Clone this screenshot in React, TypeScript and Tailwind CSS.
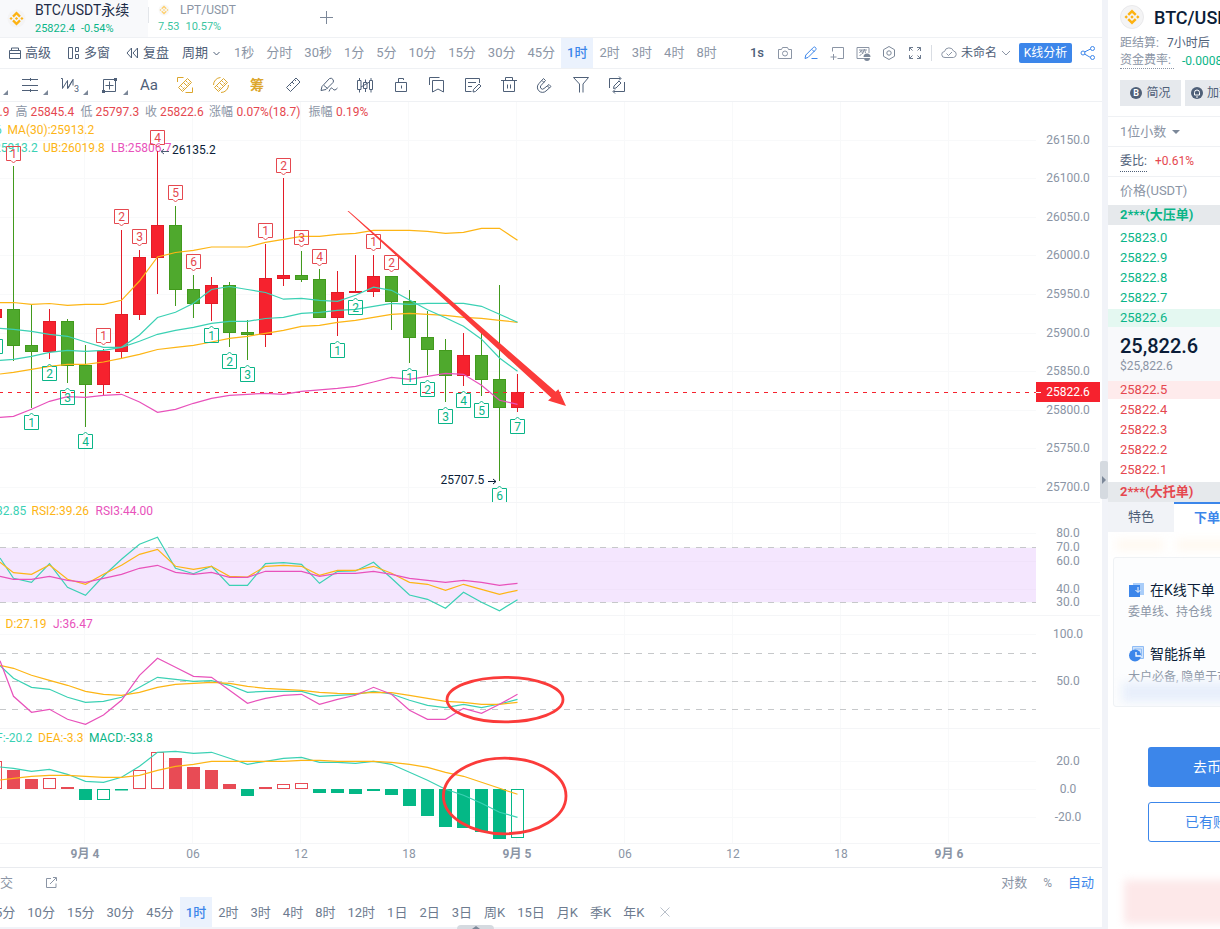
import type { ReactNode } from "react";

const GRAY = "#8b95a5";
const TEAL = "#3bd1b4";
const GOLD = "#fdb515";
const PINK = "#e852bb";

const PERIODS = ["1秒", "分时", "30秒", "1分", "5分", "10分", "15分", "30分", "45分", "1时", "2时", "3时", "4时", "8时"];
const BOTTOM_PERIODS = [
  "5分", "10分", "15分", "30分", "45分", "1时", "2时", "3时", "4时", "8时",
  "12时", "1日", "2日", "3日", "周K", "15日", "月K", "季K", "年K",
];
const ASKS = ["25823.0", "25822.9", "25822.8", "25822.7", "25822.6"];
const BIDS = ["25822.5", "25822.4", "25822.3", "25822.2", "25822.1"];

// [high, body top, body bottom, low, up?] in chart pixels, first one is half off screen
const CANDLES: [number, number, number, number, number][] = [
  [309, 309, 318, 318, 1],
  [166, 309, 346, 361, 0],
  [305, 345, 352, 408, 0],
  [309, 321, 352, 359, 1],
  [319, 321, 366, 383, 0],
  [345, 365, 385, 427, 0],
  [349, 351, 385, 395, 1],
  [230, 314, 352, 358, 1],
  [250, 257, 315, 320, 1],
  [151, 225, 258, 294, 1],
  [206, 225, 290, 306, 0],
  [275, 289, 304, 318, 0],
  [277, 285, 304, 321, 1],
  [282, 285, 333, 347, 0],
  [320, 332, 335, 360, 0],
  [244, 278, 335, 347, 1],
  [178, 275, 279, 286, 1],
  [251, 275, 280, 282, 0],
  [269, 279, 318, 318, 0],
  [271, 292, 318, 336, 1],
  [255, 291, 293, 293, 1],
  [255, 276, 292, 297, 1],
  [276, 276, 302, 330, 0],
  [290, 301, 338, 363, 0],
  [311, 337, 350, 375, 0],
  [339, 350, 376, 402, 0],
  [333, 355, 376, 386, 1],
  [333, 355, 380, 396, 0],
  [285, 379, 408, 481, 0],
  [374, 392, 408, 412, 1],
];

// [candle index, box top, label]
const SELL_MARKS: [number, number, string][] = [
  [0, 146, "1"], [5, 328, "1"], [6, 209, "2"], [7, 229, "3"], [8, 130, "4"], [9, 185, "5"], [10, 254, "6"],
  [14, 223, "1"], [15, 158, "2"], [16, 230, "3"], [17, 249, "4"], [20, 234, "1"], [21, 255, "2"],
];
const BUY_MARKS: [number, number, string][] = [
  [-1, 339, ""], [1, 415, "1"], [2, 366, "2"], [3, 390, "3"], [4, 434, "4"], [11, 328, "1"], [12, 354, "2"],
  [13, 367, "3"], [18, 343, "1"], [19, 300, "2"], [22, 370, "1"], [23, 382, "2"], [24, 409, "3"],
  [25, 393, "4"], [26, 403, "5"], [27, 488, "6"], [28, 419, "7"],
];

const UB = [302.7, 302.5, 304.3, 303.5, 305.3, 304.3, 304.3, 300.3, 281, 257, 252.5, 250.3, 247, 247, 247, 242.3, 239.3, 236.3, 236.3, 234.3, 233.3, 230.3, 230.3, 230.3, 231.3, 233.3, 232.3, 228.3, 228.3, 240.3];
const FAST = [328.3, 329.3, 331.3, 334.3, 336.3, 342, 347.3, 347.3, 335, 317.5, 312.3, 303.3, 289.5, 286.5, 289.5, 292.5, 299.2, 298.3, 300.3, 301.3, 295.3, 287.2, 290.3, 300, 309.7, 317.7, 326.3, 339.2, 358, 371.3];
const MID = [360.3, 359.3, 356.3, 352.3, 350.3, 351.3, 350.3, 347.3, 341.3, 334.3, 330.3, 327.3, 323.3, 321.3, 321.3, 318.5, 317.3, 313.3, 312.3, 310.3, 309.3, 306.3, 303.3, 304.3, 303.3, 303.3, 303.3, 306.3, 314.3, 322.3];
const SLOW = [374, 372.3, 369.3, 366.3, 364.3, 364.3, 362, 358.3, 354.3, 349.5, 347.3, 345.3, 342, 338.3, 336.3, 333.3, 330.3, 326.3, 325.3, 322.3, 320.3, 317.3, 314.3, 313.3, 314.3, 315.3, 317.3, 318.3, 320.3, 322.3];
const LB = [417.3, 416.3, 409.3, 401.3, 396.7, 397.3, 395.3, 394.3, 402, 412.3, 409.3, 403.3, 398.3, 395.3, 394.3, 393.3, 394.3, 391.3, 389.8, 388.3, 386.3, 382, 377.3, 379.3, 376.3, 373.3, 374.3, 385.3, 400.3, 404.3];

const RSI1 = [558, 578.3, 582.3, 563.7, 587.3, 595.3, 576, 559.3, 544.3, 537.3, 568.3, 573.7, 566.3, 585.3, 585.3, 563.7, 562.7, 564.3, 583.3, 571.3, 571, 562.3, 578.3, 595, 599.3, 608.3, 592.3, 602.3, 610.7, 599.7];
const RSI2 = [562.3, 572.7, 574.3, 565, 579.3, 584.3, 574.3, 565.3, 554.3, 549.3, 566.3, 569.3, 566.3, 576.3, 577, 566.3, 565.3, 566.3, 575.3, 570.3, 570.3, 566.3, 573.3, 582.3, 584.3, 590.3, 584.3, 589.3, 594.3, 590.3];
const RSI3 = [576.3, 579.3, 579.3, 576.3, 580.3, 582.3, 578.3, 574.3, 568.3, 565.3, 572.3, 574.3, 572.3, 577.3, 577.3, 571.3, 571.3, 571.3, 576.3, 573.3, 573.3, 571.3, 574.3, 578.3, 580.3, 582.3, 580.3, 582.3, 585.3, 583.3];

const K = [665.7, 678.3, 687.3, 689.3, 697.3, 702.3, 701.3, 697.3, 687.3, 677.3, 679.3, 681.3, 680.7, 685.3, 692.3, 691.3, 691.3, 691.3, 696.3, 695.3, 694.3, 691.3, 694, 700.3, 705.3, 707.7, 704.3, 707.7, 704, 699.3];
const D = [665.3, 668.3, 675.3, 680.3, 685.3, 691.3, 694.3, 695.3, 692.3, 687.3, 684.3, 683.3, 682.3, 683.3, 686.3, 688.3, 689.3, 690.3, 692.3, 693.3, 693.7, 692.3, 692.7, 695.3, 698.3, 701.3, 702.3, 704.3, 704.3, 702.3];
const J = [660.7, 696.3, 712.3, 709.3, 719.3, 724.3, 715, 700.3, 675.3, 658.3, 667.3, 676.3, 677.3, 690.3, 703.3, 698.3, 695.3, 694.3, 704.3, 699.3, 695.3, 687.3, 694.3, 710.3, 719.3, 719.3, 708.3, 713.3, 704.3, 694.3];

const DIF = [767, 768.3, 771.3, 769.3, 774.3, 781.3, 782.3, 777.3, 766.3, 752.3, 751.3, 753.3, 752.3, 758.3, 764.3, 761.3, 758.3, 757.3, 762.3, 762.3, 763.3, 761.3, 764.3, 772.3, 780.3, 789.3, 795.3, 803.3, 812.3, 817.3];
const DEA = [780, 778.3, 776.3, 775.3, 775.3, 776.3, 777.3, 777.3, 775.3, 770.3, 766.3, 764.3, 761.3, 761.3, 761.3, 761.3, 761.3, 760.3, 760.3, 761.3, 761.3, 761.3, 762.3, 764.3, 767.3, 772.3, 776.3, 782.3, 788.3, 794.3];

// [bar end, hollow?], zero line is at 789
const BARS: [number, number][] = [
  [761, 1], [770, 0], [779, 0], [778, 1], [787, 0], [800, 0], [800, 1], [790.5, 0], [770, 1], [752, 1],
  [758, 0], [767, 0], [770, 0], [784, 0], [796, 0], [787, 0], [784, 1], [783, 1], [793, 0], [793, 0],
  [794, 0], [791, 0], [795, 0], [806, 0], [816, 0], [827, 0], [828, 0], [832, 0], [839, 0], [838, 1],
];

const PRICE_AXIS: [number, string][] = [
  [140, "26150.0"], [178, "26100.0"], [217, "26050.0"], [255, "26000.0"], [294, "25950.0"],
  [333, "25900.0"], [371, "25850.0"], [410, "25800.0"], [448, "25750.0"], [487, "25700.0"],
];
const SUB_AXIS: [number, string][] = [
  [533, "80.0"], [547, "70.0"], [561, "60.0"], [589, "40.0"], [602, "30.0"],
  [634, "100.0"], [681, "50.0"], [761, "20.0"], [789, "0.0"], [817, "-20.0"],
];
const TIMES: [number, string][] = [
  [84, "9月 4"], [192, "06"], [300, "12"], [408, "18"], [516, "9月 5"], [624, "06"], [732, "12"], [840, "18"], [948, "9月 6"],
];

function Curve({ ys, color }: { ys: number[]; color: string }) {
  const points = ys.map((y, i) => `${i === 0 ? 0 : 13.5 + (i - 1) * 18},${y}`).join(" ");
  return <polyline points={points} fill="none" stroke={color} strokeWidth="1.2" />;
}

function Label({ x, y, color, children }: { x: number; y: number; color: string; children: ReactNode }) {
  return (
    <text x={x} y={y + 4} fill={color}>
      {children}
    </text>
  );
}

function Chart() {
  return (
    <svg width="1102" height="765" viewBox="0 102 1102 765" className="block text-[12px]">
      {/* Grid */}
      <g stroke="#f8f9fa">
        {TIMES.map(([x]) => (
          <line key={x} x1={x + 0.5} x2={x + 0.5} y1="102" y2="843" />
        ))}
        {[...PRICE_AXIS, ...SUB_AXIS].map(([y, label]) => (
          <line key={label + y} x1="0" x2="1036" y1={y + 0.5} y2={y + 0.5} />
        ))}
      </g>
      <g stroke="#f4f5f7">
        {[502, 615, 728, 843].map((y) => (
          <line key={y} x1="0" x2="1100" y1={y + 0.5} y2={y + 0.5} />
        ))}
      </g>
      <rect x="0" y="548" width="1036" height="54" fill="#f4e6fe" />
      <g stroke="#f0e2fa">
        <line x1="0" x2="1036" y1="561.5" y2="561.5" />
        <line x1="0" x2="1036" y1="589.5" y2="589.5" />
      </g>
      <g stroke="#c6c8ca" strokeDasharray="6 6">
        {[547, 602, 653, 681, 709].map((y) => (
          <line key={y} x1="0" x2="1036" y1={y + 0.5} y2={y + 0.5} />
        ))}
      </g>

      {/* Legends */}
      <Label x={-0.5} y={112} color="#e5484f">.9</Label>
      <Label x={15.5} y={112} color={GRAY}>高</Label>
      <Label x={30.5} y={112} color="#e5484f">25845.4</Label>
      <Label x={80.5} y={112} color={GRAY}>低</Label>
      <Label x={95.5} y={112} color="#e5484f">25797.3</Label>
      <Label x={145} y={112} color={GRAY}>收</Label>
      <Label x={160} y={112} color="#e5484f">25822.6</Label>
      <Label x={209} y={112} color={GRAY}>涨幅</Label>
      <Label x={236.5} y={112} color="#e5484f">0.07%(18.7)</Label>
      <Label x={308.5} y={112} color={GRAY}>振幅</Label>
      <Label x={336} y={112} color="#e5484f">0.19%</Label>
      <Label x={-5} y={130} color={TEAL}>6</Label>
      <Label x={7.5} y={130} color={GOLD}>MA(30):25913.2</Label>
      <Label x={-6} y={148} color={TEAL}>25913.2</Label>
      <Label x={43} y={148} color={GOLD}>UB:26019.8</Label>
      <Label x={111} y={148} color={PINK}>LB:25806.7</Label>

      {/* Candles */}
      {CANDLES.map(([high, top, bottom, low, up], i) => {
        const x = 7 + (i - 1) * 18;
        const fill = up ? "#f6222e" : "#4fa92d";
        const edge = up ? "#e31c28" : "#429a1d";
        return (
          <g key={i}>
            <rect x={x + 6} y={high} width="1" height={low - high} fill={edge} />
            <rect x={x + 0.5} y={top + 0.5} width="12" height={bottom - top - 1} fill={fill} stroke={edge} />
          </g>
        );
      })}
      <line x1="0" x2="1036" y1="392.5" y2="392.5" stroke="#f6222e" strokeDasharray="4 5" strokeDashoffset="1" />

      <Curve ys={UB} color={GOLD} />
      <Curve ys={SLOW} color={GOLD} />
      <Curve ys={FAST} color={TEAL} />
      <Curve ys={MID} color={TEAL} />
      <Curve ys={LB} color={PINK} />

      {/* Numbered marks */}
      {SELL_MARKS.map(([i, y, n]) => {
        const x = 6.5 + i * 18;
        return (
          <g key={i} stroke="#e5484f" fill="none">
            <path d={`M${x} ${y + 0.5}h14v14h-4.5l-2.5 2.5l-2.5-2.5h-4.5z`} />
            <text x={x + 7} y={y + 12} fill="#e5484f" stroke="none" textAnchor="middle">{n}</text>
          </g>
        );
      })}
      <clipPath id="main-pane">
        <rect x="0" y="102" width="1102" height="400" />
      </clipPath>
      <g clipPath="url(#main-pane)">
        {BUY_MARKS.map(([i, y, n]) => {
          const x = 6.5 + i * 18;
          return (
            <g key={i} stroke="#0ab588" fill="none">
              <path d={`M${x} ${y + 0.5}h4.5l2.5 -2.5l2.5 2.5h4.5v14h-14z`} />
              <text x={x + 7} y={y + 12} fill="#0ab588" stroke="none" textAnchor="middle">{n}</text>
            </g>
          );
        })}
      </g>

      {/* High / low callouts */}
      <Label x={172} y={150} color="#0b1d38">26135.2</Label>
      <path d="M169 151.5h-8m3-2.5l-3 2.5l3 2.5" fill="none" stroke="#4b5b74" />
      <Label x={440.5} y={480} color="#0b1d38">25707.5</Label>
      <path d="M488 481.5h8m-3-2.5l3 2.5l-3 2.5" fill="none" stroke="#0b1d38" />

      {/* RSI */}
      <Label x={-4} y={511} color={TEAL}>32.85</Label>
      <Label x={31.5} y={511} color={GOLD}>RSI2:39.26</Label>
      <Label x={95.5} y={511} color={PINK}>RSI3:44.00</Label>
      <Curve ys={RSI1} color={TEAL} />
      <Curve ys={RSI2} color={GOLD} />
      <Curve ys={RSI3} color={PINK} />

      {/* KDJ */}
      <Label x={5.5} y={624} color={GOLD}>D:27.19</Label>
      <Label x={53} y={624} color={PINK}>J:36.47</Label>
      <Curve ys={K} color={TEAL} />
      <Curve ys={D} color={GOLD} />
      <Curve ys={J} color={PINK} />

      {/* MACD */}
      <Label x={-4} y={738} color={TEAL}>F:-20.2</Label>
      <Label x={38} y={738} color={GOLD}>DEA:-3.3</Label>
      <Label x={89} y={738} color="#0ab588">MACD:-33.8</Label>
      {BARS.map(([end, hollow], i) => {
        const x = 7 + (i - 1) * 18;
        const up = end < 789;
        const color = up ? "#e84b55" : "#04b886";
        const y = up ? end : 789;
        const h = Math.abs(end - 789);
        return hollow ? (
          <rect key={i} x={x + 0.5} y={y + 0.5} width="12" height={h - 1} fill="#fff" stroke={color} />
        ) : (
          <rect key={i} x={x} y={y} width="13" height={h} fill={color} />
        );
      })}
      <Curve ys={DIF} color={TEAL} />
      <Curve ys={DEA} color={GOLD} />

      {/* Axes */}
      <g fill={GRAY} textAnchor="middle">
        {[...PRICE_AXIS, ...SUB_AXIS].map(([y, label]) => (
          <text key={label + y} x="1068" y={y + 4}>{label}</text>
        ))}
        {TIMES.map(([x, label]) => (
          <text key={x} x={x + 1} y="858" fontWeight={label.includes("月") ? 700 : 400}>{label}</text>
        ))}
      </g>
      <rect x="1036" y="382" width="64" height="20" fill="#f6222e" />
      <line x1="1036" x2="1041" y1="392.5" y2="392.5" stroke="#fff" />
      <text x="1068" y="396" fill="#fff" textAnchor="middle">25822.6</text>

      {/* Hand drawn annotations */}
      <path d="M347.5 211L348.7 211L555.7 391.8L558.3 389.3L566 406L548 400.4L551.3 397.8Z" fill="#fb3b3a" />
      <g fill="none" stroke="#fb3b3a" strokeWidth="2.8">
        <ellipse cx="505" cy="699.6" rx="58" ry="22.3" />
        <ellipse cx="504.7" cy="796" rx="61.3" ry="37.8" />
      </g>
    </svg>
  );
}

type BinanceProps = { size: number; glyph: number; ring?: string; faded?: boolean };

function Binance({ size, glyph, ring = "none", faded = false }: BinanceProps) {
  const pad = (size - glyph) / 2;
  return (
    <svg width={size} height={size} viewBox={`0 0 ${size} ${size}`} className={faded ? "shrink-0 opacity-60" : "shrink-0"}>
      <circle cx={size / 2} cy={size / 2} r={size / 2 - 0.5} fill="#f4f4f5" stroke={ring} />
      <g transform={`translate(${pad} ${pad}) scale(${glyph / 126.6})`} fill="#fdb211">
        <path d="M38.73 53.2l24.59-24.58 24.6 24.6 14.3-14.31L63.32 0 24.43 38.9z M0 63.31l14.3-14.31 14.31 14.31-14.31 14.3z M38.73 73.41l24.59 24.59 24.6-24.6 14.31 14.29-38.9 38.91-38.91-38.88z M98 63.31l14.3-14.31 14.31 14.3-14.31 14.32z M77.83 63.3L63.32 48.78 48.81 63.28l14.51 14.5z" />
      </g>
    </svg>
  );
}

function Icon({ d, color = "#4f6078", size = 18, children }: { d?: string; color?: string; size?: number; children?: ReactNode }) {
  return (
    <svg width={size} height={size} viewBox={`0 0 ${size} ${size}`} fill="none" stroke={color} strokeWidth="1" className="shrink-0">
      {d && <path d={d} />}
      {children}
    </svg>
  );
}

function Slot({ children, corner }: { children?: ReactNode; corner?: boolean }) {
  return (
    <div className={corner ? "flex w-10 h-full shrink-0 items-center justify-center" : "flex w-9 h-full shrink-0 items-center justify-center"}>
      {corner && <div className="w-[7px] shrink-0" />}
      <div className="flex flex-1 justify-center">{children}</div>
      {corner && (
        <svg width="5" height="5" viewBox="0 0 5 5" className="mt-[15px] mr-px shrink-0">
          <path d="M5 0v5H0z" fill="#7c8899" />
        </svg>
      )}
    </div>
  );
}

function GoldRuler({ frame }: { frame: string }) {
  return (
    <Icon color="#dca72e">
      <path d={frame} />
      <path d="M2.500 11.500L11.500 2.500L15.500 6.500L6.500 15.500Z M4.500 9.500l2 2 M7.500 6.500l3.500 3.500 M9.500 4.500l2 2 M6.500 13.500l2-2 M11.500 8.500l2-2" />
    </Icon>
  );
}

function DrawBar() {
  return (
    <div className="-ml-[31px] flex h-8 items-center">
      <Slot corner />
      <Slot corner>
        <Icon d="M1 3.5h16 M1 9.5h16 M1 14.5h16 M9.5 2v3 M9.5 13v3" />
      </Slot>
      <Slot corner>
        <svg width="20" height="18" viewBox="0 0 20 18" fill="none" stroke="#4f6078" strokeWidth="1">
          <path d="M1 2.500h1.500v10L7.500 4.500v8L13 3.500" />
          <path d="M8 12.500l5-9v6" />
          <text x="14" y="16" fontSize="9" fill="#4f6078" stroke="none">3</text>
        </svg>
      </Slot>
      <Slot corner>
        <Icon d="M2.5 15.500v-12h12v12z M8.500 5.500v8 M4.500 9.500h8">
          <path d="M13 2h3v3h-3z M1 14h3v3h-3z" fill="#4f6078" stroke="none" />
        </Icon>
      </Slot>
      <div className="w-[38px] shrink-0 pl-0.5 text-center text-[15px] text-[#4f6078]">Aa</div>
      <Slot>
        <GoldRuler frame="M1.500 6v-4.500h6 M16.500 11.500v5h-7" />
      </Slot>
      <Slot>
        <GoldRuler frame="M1.500 9a7.500 7.500 0 0 1 7-7.500 M16.500 9a7.500 7.500 0 0 1-7.500 7.500" />
      </Slot>
      <Slot>
        <span className="text-[14px] font-bold text-[#dca72e]">筹</span>
      </Slot>
      <Slot><Icon d="M2.500 11.500L12 2L16 6L6.500 15.500Z M5.500 8.500l1.500 1.500 M8 6l2 2 M10.500 3.500l1.500 1.500" /></Slot>
      <Slot><Icon d="M1 14.500l1-4L9.500 2.500q2-1 3.500 1q1 1.500 0 3L6 13.500L1 14.500z M4 9.500l3.500 3 M9 15.500q2-5 3.500-3t2.500 1.500t2.500-2" /></Slot>
      <Slot><Icon d="M1.500 4.500h3.500v9h-3.500z M3.500 2v2.500 M3.500 13.500v3 M7.500 6.500h3.500v6h-3.500z M9.500 3.500v3 M9.500 12.500v3.500 M13.500 4.500h3v9h-3z M15 2v2.500 M15 13.500v3 M5 11L13.500 6" /></Slot>
      <Slot><Icon d="M3.500 6.500h11v9h-11z M6.500 6.500v-4h5v1.500 M9.500 9.500v3" /></Slot>
      <Slot><Icon d="M1.500 9v-7.500h10 M4.500 4.500h11v11.500l-5.500-3l-5.500 3z" /></Slot>
      <Slot><Icon d="M15.500 7v-4.500h-14v13h6 M4 6.500h8 M4 10.500h4 M9 16l.5-2.500L15 8l2 2l-5.500 5.500z" /></Slot>
      <Slot><Icon d="M1 4.500h16 M5.500 4.500v-3h7v3 M3.500 4.500v11h11v-11 M7.500 8.500v4 M10.500 8.500v4" /></Slot>
      <Slot><Icon d="M7.500 2.500l-4.500 5a5 5 0 0 0 7 7.500l5-4.500l-2-2l-5 4a2 2 0 0 1-3-3l4.500-5z M6 4.500l2 2 M11.500 10l2 2" /></Slot>
      <Slot><Icon d="M1.500 1.500h15l-5.500 6.500v8.500 M1.500 1.500l6 6.500v8.500" /></Slot>
      <Slot><Icon d="M1.500 12v-9.500h11 M11 .5l2 2l-2 2 M16.500 6v9.500h-11 M7 13.500l-2 2l2 2 M5.500 12.500l.5-2.500l5-5l2 2l-5 5z" /></Slot>
    </div>
  );
}

function MainBar() {
  return (
    <div className="flex h-[31px] items-center border-b border-[#eff1f4] text-[13px] text-[#4f6078]">
      <div className="flex w-[228px] shrink-0 items-center pl-2">
        <Icon size={14} d="M1.500 4.500h11v8h-11z M3.500 4.500v-2.500h7v2.500 M1.500 7.500h11" />
        <span className="ml-[3px]">高级</span>
        <span className="ml-4 flex">
          <Icon size={14} d="M1.500 1.500h4v11h-4z M8.500 1.500h3v4h-3z M8.500 8.500h3v4h-3z" />
        </span>
        <span className="ml-[3px]">多窗</span>
        <span className="ml-4 flex">
          <Icon size={14} d="M5.500 2v10L1 7z M11.500 2v10L7 7z" />
        </span>
        <span className="ml-[3px]">复盘</span>
        <span className="ml-[13px]">周期</span>
        <span className="ml-1 flex">
          <Icon size={9} d="M1.500 3l3 3l3-3" />
        </span>
      </div>
      {PERIODS.map((p) => (
        <div
          key={p}
          className={
            p === "1时"
              ? "flex h-full shrink-0 items-center bg-[#ebf2fd] px-1.5 font-medium text-[#3c86ea]"
              : "flex h-full shrink-0 items-center px-1.5 text-[#8b95a5]"
          }
        >
          {p}
        </div>
      ))}
      <div className="flex-1" />
      <span className="w-[14px] font-medium">1s</span>
      <div className="ml-[13px] flex items-center gap-2.5">
        <Icon size={16} color={GRAY} d="M1.500 4.500h3l1-2h5l1 2h3v9h-13z">
          <circle cx="8" cy="8.500" r="2.500" />
        </Icon>
        <Icon size={16} color="#3c86ea" d="M2 13.500l.8-3.500l7.700-7.700q1-.8 2 .2t.3 2.200l-7.700 7.700z M9 4.500l2.500 2.500 M8.500 13.500h6" />
        <Icon size={16} color={GRAY} d="M3.500 6.500v-4h11v11h-6 M4.500 9v6 M1.500 12h6" />
        <Icon size={16} color={GRAY}>
          <path d="M14 8v-5.500h-12v11h7 M4 5h8 M4.500 8l2-3l1 4l2-5l1 4 M4.500 11l2-2" />
          <path d="M8.500 12a3.500 3.500 0 0 1 7 0z M9 13h6a3 3 0 0 1-6 0z" fill="#7c8899" stroke="none" />
        </Icon>
        <Icon size={16} color="#7c8899" d="M8 1.500l5.500 3.200v6.600l-5.500 3.200l-5.500-3.200v-6.600z">
          <circle cx="8" cy="8" r="2.200" />
        </Icon>
        <Icon size={16} color="#6d7b8f" d="M2.500 6v-3.500h3.500 M2.500 2.500l3 3 M10 2.500h3.500v3.500 M13.500 2.500l-3 3 M2.500 10v3.500h3.500 M2.500 13.500l3-3 M13.500 10v3.500h-3.500 M13.500 13.500l-3-3" />
      </div>
      <div className="ml-2 h-4 w-px bg-[#d9dde3]" />
      <div className="ml-[9px] flex items-center text-[12px]">
        <Icon size={16} color={GRAY} d="M4 12.500a3 3 0 0 1-.5-6a4.700 4.700 0 0 1 9-.5a3.300 3.300 0 0 1 0 6.500z M5.500 8.500l2 2l3.500-3.500" />
        <span className="ml-1">未命名</span>
        <span className="ml-1">
          <Icon size={10} color={GRAY} d="M1 3l4 4l4-4" />
        </span>
      </div>
      <div className="ml-2 flex h-5 w-[53px] items-center justify-center rounded-[2px] bg-[#3c86ea] text-[12px] text-white">K线分析</div>
      <div className="mr-1.5 ml-2">
        <Icon size={16} color="#3c86ea" d="M4.500 7l6-3 M4.500 9l6 3.500">
          <circle cx="3" cy="8" r="2" />
          <circle cx="12.500" cy="3.500" r="2" />
          <circle cx="12.500" cy="12.500" r="2" />
        </Icon>
      </div>
    </div>
  );
}

function SidePanel() {
  return (
    <aside className="relative w-[112px] shrink-0 overflow-hidden bg-white">
      <div className="flex h-full w-[300px] flex-col text-[12px]">
        <div className="h-[117px] shrink-0 border-b border-[#eff1f4] pt-[5px] pl-3">
          <div className="flex h-6 items-center">
            <Binance size={24} glyph={15} ring="#e9e9eb" />
            <span className="ml-2.5 text-[18px] font-medium text-[#0b1d38]">BTC/USDT永续</span>
          </div>
          <div className="mt-[5px] flex h-[18px] items-center">
            <span className="w-[47px] text-[#8b95a5]">距结算:</span>
            <span className="text-[#4f6078]">7小时后</span>
          </div>
          <div className="flex h-[18px] items-center">
            <span className="w-[54px] border-b border-dotted border-[#8b95a5] leading-[15px] text-[#8b95a5]">资金费率:</span>
            <span className="ml-2 text-[#0ab588]">-0.0008%</span>
          </div>
          <div className="mt-2.5 flex gap-1 text-[#4f6078]">
            <div className="flex h-[26px] w-[61px] items-center justify-center gap-1 bg-[#e6e9ed]">
              <svg width="12" height="12" viewBox="0 0 12 12">
                <circle cx="6" cy="6" r="6" fill="#4f6078" />
                <text x="6" y="9.200" fontSize="9" fontWeight="700" fill="#fff" textAnchor="middle">B</text>
              </svg>
              简况
            </div>
            <div className="flex h-[26px] w-[80px] items-center gap-1 bg-[#e6e9ed] pl-1.5">
              <svg width="12" height="12" viewBox="0 0 12 12">
                <circle cx="6" cy="6" r="6" fill="#4f6078" />
                <path d="M3.500 8h5v-2.500a2.500 2.500 0 0 0-5 0z M5 10h2" fill="none" stroke="#fff" />
              </svg>
              加预警
            </div>
          </div>
        </div>
        <div className="flex h-[30px] shrink-0 items-center border-b border-[#eff1f4] pl-3 text-[13px] text-[#8b95a5]">
          1位小数
          <svg width="8" height="4" viewBox="0 0 8 4" className="ml-1.5">
            <path d="M0 0h8l-4 4z" fill="#7c8899" />
          </svg>
        </div>
        <div className="flex h-[30px] shrink-0 items-center border-b border-[#eff1f4] pb-px pl-3">
          <span className="mt-1 w-[27px] border-b border-dotted border-[#4f6078] pb-0.5 leading-[15px] text-[#4f6078]">委比:</span>
          <span className="ml-2 text-[#e5484f]">+0.61%</span>
        </div>
        <div className="flex h-7 shrink-0 items-center pl-3 text-[13px] text-[#8b95a5]">价格(USDT)</div>
        <div className="flex h-5 shrink-0 items-center bg-[#e6e9ec] pb-px pl-3 text-[13px] font-bold text-[#0ab588]">2***(大压单)</div>
        <div className="mt-[3px] shrink-0">
          {ASKS.map((p, i) => (
            <div key={p} className="flex h-5 items-center text-[13px] text-[#0ab588]">
              <div className={i === 4 ? "flex h-[18px] w-full items-center bg-[#e4f8f1] pl-3" : "pl-3"}>{p}</div>
            </div>
          ))}
        </div>
        <div className="-mt-px h-[54px] shrink-0 bg-[#f8f9fb] pt-1.5 pl-3">
          <div className="text-[20px] leading-[26px] font-medium text-[#0b1d38]">25,822.6</div>
          <div className="leading-[14px] text-[#8b95a5]">$25,822.6</div>
        </div>
        <div className="-mt-px h-[102px] shrink-0">
          {BIDS.map((p, i) => (
            <div key={p} className="flex h-5 items-center text-[13px] text-[#e5484f]">
              <div className={i === 0 ? "flex h-[18px] w-full items-center bg-[#feebec] pl-3" : "pl-3"}>{p}</div>
            </div>
          ))}
        </div>
        <div className="flex h-5 shrink-0 items-center bg-[#e6e9ec] pb-px pl-3 text-[13px] font-bold text-[#e5484f]">2***(大托单)</div>
        <div className="flex h-[30px] shrink-0 bg-[#f1f3f7] text-[13px] text-[#4f6078]">
          <div className="flex w-[66px] items-center justify-center">特色</div>
          <div className="flex w-[66px] items-center justify-center border-t-2 border-[#3c86ea] bg-white font-bold text-[#3c86ea]">下单</div>
        </div>
        <div className="ml-2 flex h-[25px] shrink-0 items-center gap-3">
          <div className="h-2.5 w-12 bg-[#fff8ef] blur-[5px]" />
          <div className="h-2.5 w-24 bg-[#fff8ef] blur-[5px]" />
        </div>
        <div className="ml-[5px] h-[150px] w-[280px] shrink-0 overflow-hidden rounded-[3px] border border-[#eff2f5] bg-[#fcfdfe]">
          <div className="pt-[22px] pl-[15px]">
            <div className="flex h-5 items-center">
              <svg width="15" height="16" viewBox="0 0 15 16">
                <path d="M4 1h11v12h-11z" fill="#a9cdf9" />
                <path d="M0 3h11v12h-11z" fill="#3c86ea" />
                <path d="M9 5v5 M6.500 8l2.500 2.500L11.500 8" stroke="#fff" fill="none" />
              </svg>
              <span className="ml-1.5 text-[14px] text-[#0b1d38]">在K线下单</span>
            </div>
            <div className="-ml-px mt-[3px] leading-[18px] text-[#8b95a5]">委单线、持仓线</div>
            <div className="mt-[23px] flex h-5 items-center">
              <svg width="15" height="16" viewBox="0 0 15 16">
                <path d="M3.500 .5h11v12h-11z M5.500 3h7v7" fill="#cfe3fb" stroke="#8fbcf5" />
                <circle cx="6" cy="9.500" r="6" fill="#3c86ea" />
                <path d="M7 6v4h5" stroke="#fff" fill="none" strokeWidth="1.300" />
              </svg>
              <span className="ml-1.5 text-[14px] text-[#0b1d38]">智能拆单</span>
            </div>
            <div className="-ml-px mt-1 leading-[18px] text-[#8b95a5]">大户必备, 隐单于市</div>
          </div>
          <div className="-mt-1 ml-2 h-5 w-[260px] bg-[#e8effb] blur-[5px]" />
        </div>
        <div className="mt-10 ml-10 flex h-10 w-[132px] shrink-0 items-center justify-center rounded-[3px] bg-[#3c86ea] text-[14px] text-white">去币安</div>
        <div className="mt-[15px] ml-10 flex h-10 w-[130px] shrink-0 items-center justify-center rounded-[3px] border border-[#3c86ea] bg-white text-[14px] text-[#3c86ea]">已有账户</div>
        <div className="mt-[38px] ml-4 h-[44px] w-[260px] shrink-0 bg-[#fde8e9] blur-[4px]" />
      </div>
    </aside>
  );
}

export default function App() {
  return (
    <div className="flex h-[929px] w-[1220px] overflow-hidden bg-[#f1f3f8] font-[Roboto,'Noto_Sans_CJK_SC',sans-serif]">
      <main className="relative flex h-[927px] w-[1102px] shrink-0 flex-col bg-white">
        {/* Symbol tabs */}
        <div className="flex h-[38px] shrink-0 border-b border-[#eff1f4]">
          <div className="flex h-[37px] w-[148px] items-center bg-[#f8f9fb] pl-[7px]">
            <Binance size={19} glyph={14} />
            <div className="ml-[9px]">
              <div className="h-[19px] text-[14px] leading-[19px] whitespace-nowrap text-[#1c2b46]">BTC/USDT永续</div>
              <div className="h-[17px] text-[11px] leading-[17px] text-[#0ab588]">
                25822.4<span className="ml-1.5">-0.54%</span>
              </div>
            </div>
          </div>
          <div className="mt-[7px] h-4 w-px bg-[#e3e6ea]" />
          <div className="ml-[9px]">
            <div className="flex h-5 items-center text-[12px] text-[#8b95a5]">
              <Binance size={12} glyph={9} faded />
              <span className="ml-2.5">LPT/USDT</span>
            </div>
            <div className="h-3 text-[11px] leading-[13px] text-[#3bc59f]">
              7.53<span className="ml-1.5">10.57%</span>
            </div>
          </div>
          <div className="mt-2.5 ml-[83px]">
            <Icon size={14} color="#7c8899" d="M7.500 1v13 M1 7.500h13" />
          </div>
        </div>
        <MainBar />
        <div className="h-[33px] shrink-0 overflow-hidden border-b border-[#eff1f4]">
          <DrawBar />
        </div>
        <Chart />
        <div className="flex h-[30px] shrink-0 items-center border-t border-[#e9ebef] text-[13px] text-[#8b95a5]">
          <span>交</span>
          <span className="ml-8">
            <Icon size={13} color={GRAY} d="M6 2.500h-4.500v9h9.500v-4 M5 8l6-6 M8 1.500h3.500v3.500" />
          </span>
          <div className="flex-1" />
          <span>对数</span>
          <span className="ml-4 text-[12px]">%</span>
          <span className="mr-2 ml-4 text-[#3c86ea]">自动</span>
        </div>
        <div className="flex h-[30px] shrink-0 items-center overflow-hidden text-[13px] text-[#6d7b8f]">
          <div className="-ml-[11px] flex h-full shrink-0 items-center">
            {BOTTOM_PERIODS.map((p) => (
              <div
                key={p}
                className={
                  p === "1时"
                    ? "flex h-full items-center bg-[#ebf2fd] px-1.5 pt-px font-medium text-[#3c86ea]"
                    : "flex h-full items-center px-1.5 pt-px"
                }
              >
                {p}
              </div>
            ))}
          </div>
          <span className="ml-2.5">
            <Icon size={10} color="#b9c0ca" d="M.5 .5l9 9 M9.500 .5l-9 9" />
          </span>
        </div>
        {/* Drag handles */}
        <div className="absolute top-[925px] left-[457px] flex h-1 w-[37px] justify-center rounded-t-sm bg-[#d5dae0]">
          <svg width="8" height="4" viewBox="0 0 8 4">
            <path d="M0 4l4-3l4 3z" fill="#7c8899" />
          </svg>
        </div>
        <div className="absolute top-[461px] left-[1100px] z-10 flex h-[38px] w-2 items-center justify-center rounded-[2px] bg-[#d5dae0]">
          <svg width="4" height="8" viewBox="0 0 4 8">
            <path d="M0 0l4 4l-4 4z" fill="#7c8899" />
          </svg>
        </div>
      </main>
      <div className="w-1.5 shrink-0" />
      <SidePanel />
    </div>
  );
}
